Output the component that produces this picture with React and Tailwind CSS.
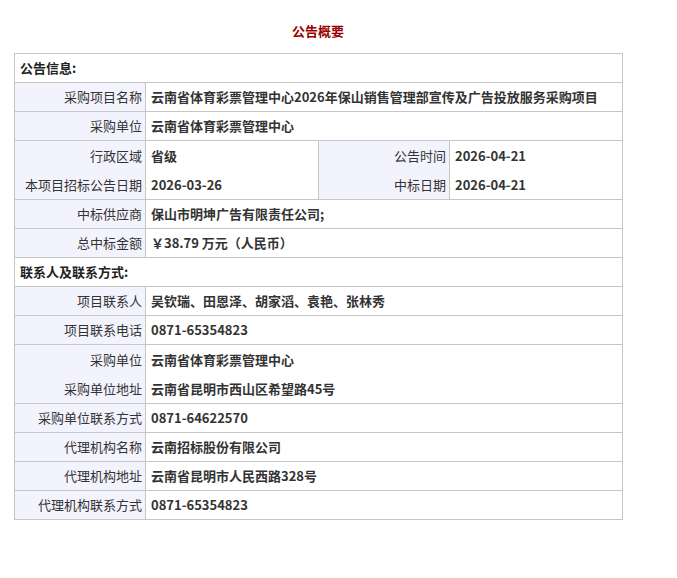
import React from 'react';

const font = { fontFamily: '"Microsoft YaHei", "Noto Sans CJK SC", "Noto Sans", sans-serif' };

const Label = ({ children, rowSpanLines }) => (
    <td className="border border-[#c6c6c6] bg-[#f3f3fd] text-right pr-[3px] pl-0 py-0 align-middle text-[#333] font-normal">
        {rowSpanLines ? rowSpanLines.map((l) => <div key={l} className="h-[29px] leading-[29px]">{l}</div>) : children}
    </td>
);

const Value = ({ children, lines, colSpan }) => (
    <td colSpan={colSpan} className="border border-[#c6c6c6] bg-white text-left pl-[5px] py-0 align-middle font-bold text-[#333]">
        {lines ? lines.map((l) => <div key={l} className="h-[29px] leading-[29px]">{l}</div>) : children}
    </td>
);

const Section = ({ title }) => (
    <tr className="h-[29px]">
        <td colSpan={4} className="border border-[#c6c6c6] bg-white pl-[5px] py-0 font-bold text-[#222] leading-[28px]">{title}</td>
    </tr>
);

const Row = ({ label, value }) => (
    <tr className="h-[29px]">
        <Label>{label}</Label>
        <Value colSpan={3}>{value}</Value>
    </tr>
);

export default function App() {
    return (
        <div className="min-h-[578px] bg-white text-[13px]" style={font}>
            <div className="ml-[14px] w-[608px] pt-[21px]">
                <h1 className="h-[20px] leading-[20px] text-center text-[13px] font-bold text-[#990000]">公告概要</h1>
                <table className="mt-[12px] w-[608px] table-fixed border-collapse">
                    <colgroup>
                        <col className="w-[131px]" />
                        <col className="w-[173px]" />
                        <col className="w-[131px]" />
                        <col className="w-[173px]" />
                    </colgroup>
                    <tbody>
                        <Section title="公告信息:" />
                        <Row label="采购项目名称" value="云南省体育彩票管理中心2026年保山销售管理部宣传及广告投放服务采购项目" />
                        <Row label="采购单位" value="云南省体育彩票管理中心" />
                        <tr>
                            <Label rowSpanLines={['行政区域', '本项目招标公告日期']} />
                            <Value lines={['省级', '2026-03-26']} />
                            <Label rowSpanLines={['公告时间', '中标日期']} />
                            <Value lines={['2026-04-21', '2026-04-21']} />
                        </tr>
                        <Row label="中标供应商" value="保山市明坤广告有限责任公司;" />
                        <Row label="总中标金额" value="￥38.79 万元（人民币）" />
                        <Section title="联系人及联系方式:" />
                        <Row label="项目联系人" value="吴钦瑞、田恩泽、胡家滔、袁艳、张林秀" />
                        <Row label="项目联系电话" value="0871-65354823" />
                        <tr>
                            <Label rowSpanLines={['采购单位', '采购单位地址']} />
                            <Value colSpan={3} lines={['云南省体育彩票管理中心', '云南省昆明市西山区希望路45号']} />
                        </tr>
                        <Row label="采购单位联系方式" value="0871-64622570" />
                        <Row label="代理机构名称" value="云南招标股份有限公司" />
                        <Row label="代理机构地址" value="云南省昆明市人民西路328号" />
                        <Row label="代理机构联系方式" value="0871-65354823" />
                    </tbody>
                </table>
            </div>
        </div>
    );
}
